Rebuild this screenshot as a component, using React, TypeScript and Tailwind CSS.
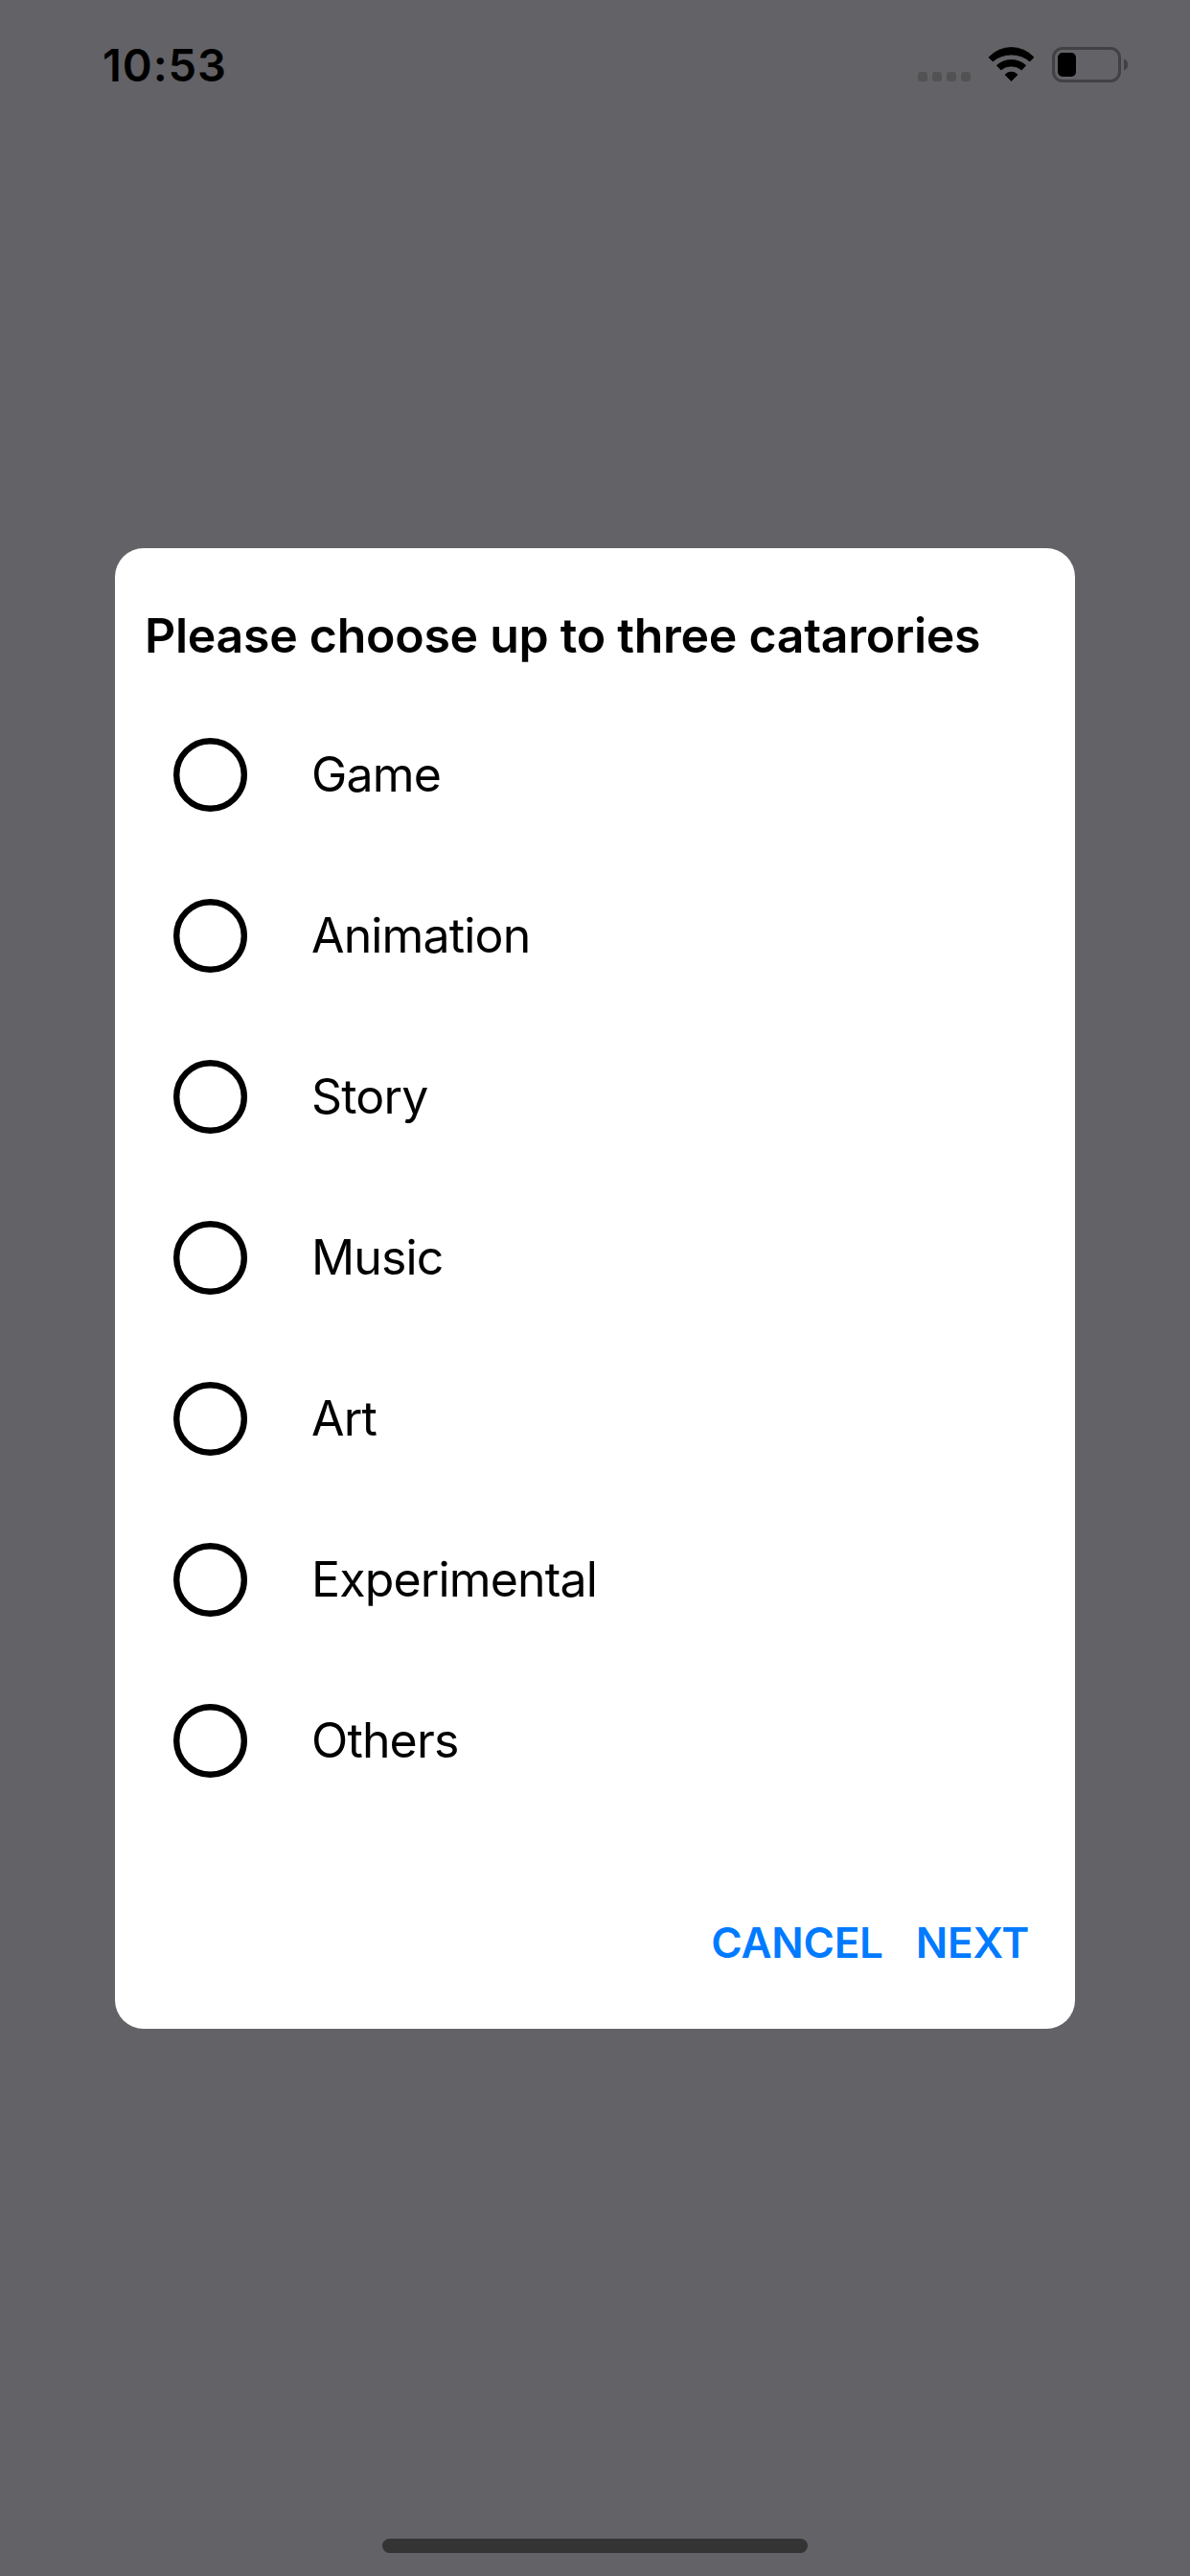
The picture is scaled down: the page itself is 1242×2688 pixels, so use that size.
const categories = ['Game', 'Animation', 'Story', 'Music', 'Art', 'Experimental', 'Others'];

function SignalDots() {
  return (
    <svg width="55" height="37" viewBox="0 0 55 37" fill="#525255">
      {[0, 15, 30, 45].map((x) => (
        <rect key={x} x={x} y="26" width="10" height="10" rx="3" />
      ))}
    </svg>
  );
}

function WifiIcon() {
  return (
    <svg className="ml-[18px]" width="49" height="37" viewBox="0 0 49 37" stroke="#000" strokeWidth="0.8" strokeLinejoin="round">
      <path d="M1 10.8A32 32 0 0 1 48 10.8L43.8 15A30 30 0 0 0 5.2 15Z" />
      <path d="M9.3 19.3A23 23 0 0 1 39.7 19.3L35.3 23.9A17 17 0 0 0 13.7 23.9Z" />
      <path d="M18 28.9A9 9 0 0 1 31 28.9L24.5 35.6Z" />
    </svg>
  );
}

function BatteryIcon() {
  return (
    <svg className="ml-[18px]" width="80" height="37" viewBox="0 0 80 37">
      <rect x="1.5" y="1.5" width="69" height="34" rx="9.5" fill="none" stroke="#414143" strokeWidth="3" />
      <path d="M75 12.5a6.6 6.6 0 0 1 0 12.2Z" fill="#414143" />
      <rect x="6" y="6" width="19" height="25" rx="5" />
    </svg>
  );
}

function Radio() {
  return (
    <svg width="77" height="77" viewBox="0 0 77 77" fill="none" stroke="#000" strokeWidth="6.4">
      <circle cx="38.5" cy="38.5" r="35.3" />
    </svg>
  );
}

export default function App() {
  return (
    <div className="flex h-[2688px] w-[1242px] flex-col items-center bg-[#636266] font-['Inter',sans-serif] text-black">
      <header className="flex h-[136px] w-full items-start justify-between pr-[64px] pl-[107px]">
        <span className="mt-[44px] text-[47px] leading-[48px] font-semibold tracking-[0.9px]">10:53</span>
        <div className="mt-[49px] flex">
          <SignalDots />
          <WifiIcon />
          <BatteryIcon />
        </div>
      </header>
      <main className="mt-[436px] flex h-[1545px] w-[1002px] flex-col rounded-[30px] bg-white">
        <h1 className="mt-[59px] ml-[31px] text-[50px] leading-[64px] font-semibold tracking-[-0.27px] whitespace-nowrap">
          Please choose up to three catarories
        </h1>
        <ul className="mt-[29px]">
          {categories.map((name) => (
            <li key={name} className="flex h-[168px] items-start pt-[46px] pl-[61px]">
              <Radio />
              <span className="ml-[67px] text-[50px] leading-[76px] tracking-[-0.85px]">{name}</span>
            </li>
          ))}
        </ul>
        <div className="mt-[97px] flex justify-end gap-[34px] pr-[48px] text-[44px] leading-[60px] font-semibold tracking-[-0.2px] text-[#007aff]">
          <button>CANCEL</button>
          <button>NEXT</button>
        </div>
      </main>
      <div className="mt-[532px] h-[15px] w-[444px] rounded-full bg-[#343434]" />
    </div>
  );
}
